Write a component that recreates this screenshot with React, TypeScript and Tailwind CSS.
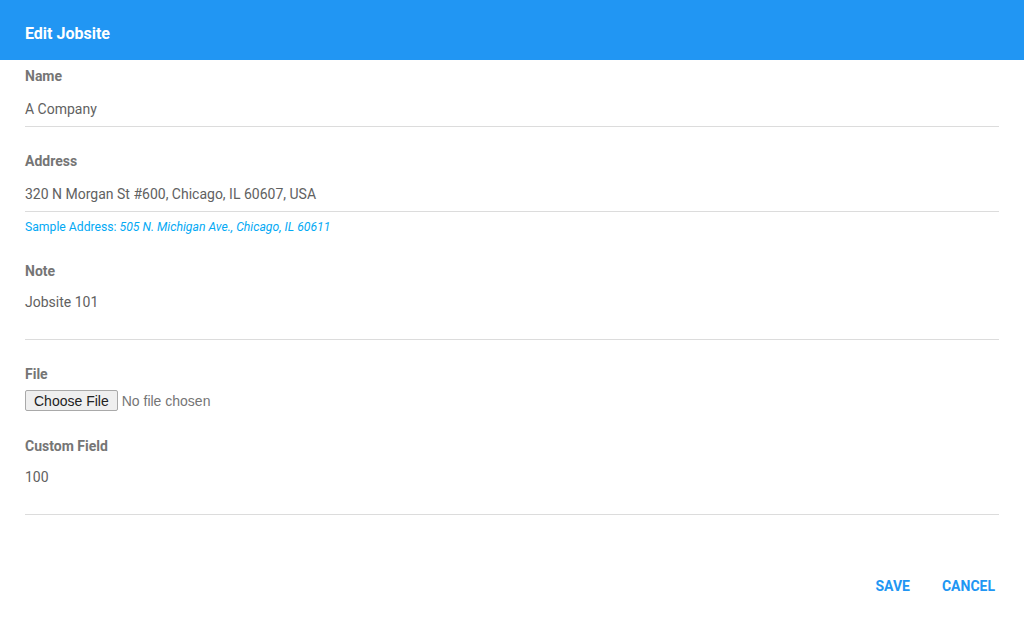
import type { FC, ReactNode } from "react";

interface FieldProps {
  label: string;
  children: ReactNode;
  className?: string;
}

const Field: FC<FieldProps> = ({ label, children, className = "" }) => (
  <div className={className}>
    <label className="block h-[20px] text-[14px] font-bold leading-[21px] text-[#757575]">{label}</label>
    {children}
  </div>
);

const TextValue: FC<{ value: string; tall?: boolean }> = ({ value, tall }) => (
  <div
    className={`border-b border-[#dcdcdc] text-[14px] leading-[21px] text-[#616161] ${
      tall ? "pt-[11px] pb-[26px]" : "pt-[13px] pb-[6px]"
    }`}
  >
    {value}
  </div>
);

export default function App() {
  return (
    <div className="min-h-[619px] bg-white font-['Roboto',sans-serif]">
      <header className="flex h-[60px] items-center bg-[#2196f3] px-[25px] pt-[8px]">
        <h1 className="text-[16px] font-bold text-white">Edit Jobsite</h1>
      </header>

      <form className="px-[25px]">
        <Field label="Name" className="pt-[6px]">
          <TextValue value="A Company" />
        </Field>

        <Field label="Address" className="mt-[24px]">
          <TextValue value="320 N Morgan St #600, Chicago, IL 60607, USA" />
          <p className="mt-[7px] text-[12.2px] leading-[16px] text-[#03a9f4]">
            Sample Address: <em>505 N. Michigan Ave., Chicago, IL 60611</em>
          </p>
        </Field>

        <Field label="Note" className="mt-[26px]">
          <TextValue value="Jobsite 101" tall />
        </Field>

        <Field label="File" className="mt-[24px]">
          <input
            type="file"
            className="mt-[6px] block h-[21px] font-['Liberation_Sans',sans-serif] text-[14px] leading-[21px] text-[#757575] file:mr-[4px] file:h-[21px] file:rounded-[2px] file:border file:border-[#a9a9a9] file:bg-[#efefef] file:px-[8px] file:text-[#222]"
          />
        </Field>

        <Field label="Custom Field" className="mt-[25px]">
          <TextValue value="100" tall />
        </Field>
      </form>

      <div className="mt-[53px] flex justify-end pr-[13px]">
        <button
          type="button"
          className="h-[36px] px-[16px] text-[14px] font-bold uppercase leading-[37px] text-[#2196f3]"
        >
          Save
        </button>
        <button
          type="button"
          className="h-[36px] px-[16px] text-[14px] font-bold uppercase leading-[37px] text-[#2196f3]"
        >
          Cancel
        </button>
      </div>
    </div>
  );
}
